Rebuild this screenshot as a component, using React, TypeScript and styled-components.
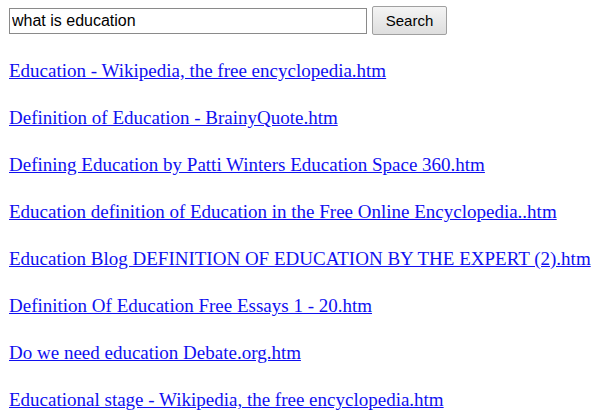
import React from 'react';
import styled, { createGlobalStyle } from 'styled-components';

const GlobalStyle = createGlobalStyle`
  body {
    margin: 0;
    background: #ffffff;
    overflow: hidden;
  }
`;

const Page = styled.div`
  padding: 6px 9px 0;
`;

const SearchForm = styled.form`
  display: flex;
  align-items: center;
  gap: 5px;
  margin: 0 0 25px;
`;

const QueryInput = styled.input`
  box-sizing: border-box;
  width: 358px;
  height: 26px;
  padding: 1px 2px;
  border: 1px solid #8a8a8a;
  font-family: 'Liberation Sans', Arial, sans-serif;
  font-size: 16px;
  color: #000;
  outline: none;
`;

const SearchButton = styled.button`
  box-sizing: border-box;
  width: 75px;
  height: 29px;
  border: 1px solid #a0a0a0;
  border-radius: 2px;
  background: linear-gradient(#f4f4f4, #dedede);
  font-family: 'Liberation Sans', Arial, sans-serif;
  font-size: 15px;
  color: #000;
`;

const ResultList = styled.div`
  display: flex;
  flex-direction: column;
  gap: 25px;
`;

const ResultLink = styled.a`
  font-family: 'Liberation Serif', 'Times New Roman', serif;
  font-size: 19px;
  line-height: 22px;
  color: #1010f0;
  text-decoration: underline;
  white-space: nowrap;
  align-self: flex-start;
`;

const results = [
  'Education - Wikipedia, the free encyclopedia.htm',
  'Definition of Education - BrainyQuote.htm',
  'Defining Education by Patti Winters Education Space 360.htm',
  'Education definition of Education in the Free Online Encyclopedia..htm',
  'Education Blog DEFINITION OF EDUCATION BY THE EXPERT (2).htm',
  'Definition Of Education Free Essays 1 - 20.htm',
  'Do we need education Debate.org.htm',
  'Educational stage - Wikipedia, the free encyclopedia.htm',
];

export default function App() {
  return (
    <Page>
      <GlobalStyle />
      <SearchForm onSubmit={(e) => e.preventDefault()}>
        <QueryInput defaultValue="what is education" />
        <SearchButton type="submit">Search</SearchButton>
      </SearchForm>
      <ResultList>
        {results.map((title) => (
          <ResultLink key={title} href="#">
            {title}
          </ResultLink>
        ))}
      </ResultList>
    </Page>
  );
}
